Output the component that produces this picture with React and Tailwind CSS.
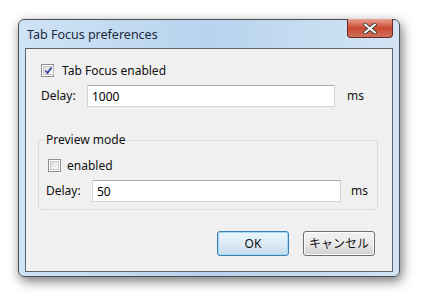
import React, { useState } from "react";

function Check({ checked, onChange }) {
  return (
    <button
      onClick={onChange}
      className="w-[13px] h-[13px] border border-[#8f8f8f] bg-white p-[1px] flex"
    >
      <div className="flex-1 border border-[#c8c8c8] bg-gradient-to-br from-[#dcdcdc] to-[#fbfbfb] flex items-center justify-center">
        {checked && (
          <svg width="9" height="9" viewBox="0 0 9 9">
            <path d="M1.5 4.5 L3.5 7 L7.5 1.5" fill="none" stroke="#2f45a0" strokeWidth="1.8" />
          </svg>
        )}
      </div>
    </button>
  );
}

function Field({ value, onChange, width }) {
  return (
    <input
      value={value}
      onChange={e => onChange(e.target.value)}
      className={`h-[22px] border border-[#d5d5d5] border-t-[#abadb3] bg-white px-[4px] text-[12px] text-black outline-none ${width}`}
    />
  );
}

export default function App() {
  const [tabOn, setTabOn] = useState(true);
  const [delay, setDelay] = useState("1000");
  const [preview, setPreview] = useState(false);
  const [pDelay, setPDelay] = useState("50");

  return (
    <div
      className="w-[421px] h-[300px] bg-white pt-[19px] pl-[18px]"
      style={{ fontFamily: '"Noto Sans", "Noto Sans CJK JP", sans-serif' }}
    >
      <div className="w-[382px] h-[258px] rounded-[6px] border border-[#4a4f57] bg-gradient-to-r from-[#cfe3f6] via-[#b7d3ee] to-[#d3e4f4] shadow-[2px_4px_12px_rgba(0,0,0,0.55)] flex flex-col px-[6px]">
        {/* title bar */}
        <div className="h-[28px] flex items-start justify-between">
          <div className="pt-[7px] pl-[2px] text-[12.5px] leading-[15px] text-[#1e2a3a]">Tab Focus preferences</div>
          <div className="w-[46px] h-[19px] mt-[-1px] rounded-b-[4px] border border-[#6b2a20] border-t-0 bg-gradient-to-b from-[#e8a193] via-[#c9472f] to-[#d0705a] flex items-center justify-center">
            <svg width="14" height="11" viewBox="0 0 14 11">
              <path d="M2 1.5 L12 9.5 M12 1.5 L2 9.5" stroke="#3a3a3a" strokeWidth="3.6" strokeLinecap="round" />
              <path d="M2 1.5 L12 9.5 M12 1.5 L2 9.5" stroke="#ffffff" strokeWidth="2" strokeLinecap="round" />
            </svg>
          </div>
        </div>

        {/* client */}
        <div className="h-[224px] border border-[#5b6572] bg-[#f0f0f0] flex flex-col text-[12px] text-[#111] pl-[15px]">
          <div className="mt-[15px] h-[13px] flex items-center gap-[8px]">
            <Check checked={tabOn} onChange={() => setTabOn(!tabOn)} />
            <span className="leading-[13px]">Tab Focus enabled</span>
          </div>

          <div className="mt-[8px] flex items-center">
            <span className="w-[46px]">Delay:</span>
            <Field value={delay} onChange={setDelay} width="w-[248px]" />
            <span className="ml-[12px]">ms</span>
          </div>

          <div className="relative mt-[33px] ml-[-3px] w-[340px] h-[70px] rounded-[3px] border border-[#d5dfe5] pl-[9px]">
            <span className="absolute left-[6px] top-[-9px] bg-[#f0f0f0] px-[1px] leading-[16px]">Preview mode</span>
            <div className="mt-[18px] h-[13px] flex items-center gap-[6px]">
              <Check checked={preview} onChange={() => setPreview(!preview)} />
              <span className="leading-[13px]">enabled</span>
            </div>
            <div className="mt-[8px] flex items-center">
              <span className="w-[46px] ml-[-2px]">Delay:</span>
              <Field value={pDelay} onChange={setPDelay} width="w-[249px]" />
              <span className="ml-[10px]">ms</span>
            </div>
          </div>

          <div className="mt-[21px] flex justify-end gap-[14px] pr-[17px]">
            <button className="w-[72px] h-[25px] rounded-[3px] border border-[#3c7fb1] bg-gradient-to-b from-[#eaf6fd] via-[#dcecf6] to-[#c6dcea] shadow-[inset_0_0_0_1px_#a3d9f5]">
              OK
            </button>
            <button className="w-[72px] h-[25px] rounded-[3px] border border-[#707070] bg-gradient-to-b from-[#f2f2f2] via-[#ebebeb] to-[#cfcfcf] shadow-[inset_0_0_0_1px_#fcfcfc]">
              キャンセル
            </button>
          </div>
        </div>
      </div>
    </div>
  );
}
